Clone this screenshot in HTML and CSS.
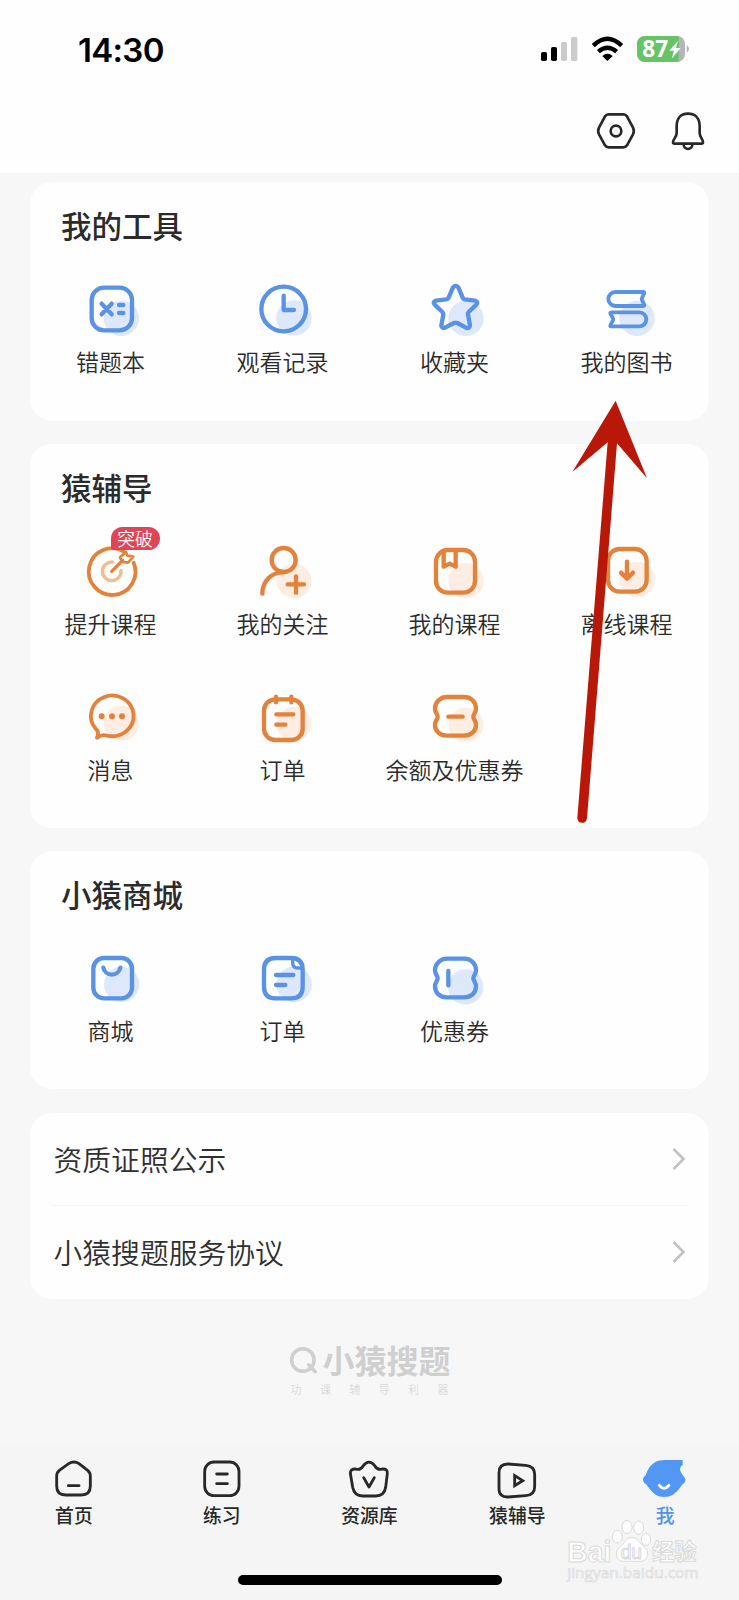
FILE: index.html
```html
<!DOCTYPE html>
<html lang="zh-CN">
<head>
<meta charset="utf-8">
<title>我</title>
<link rel="stylesheet" href="styles.css">
</head>
<body>
<div class="screen">
  <header class="header">
    <div class="status">
      <span class="time">14:30</span>
      <svg class="status-icons" viewBox="51 30 468 120">
        <g fill="#000"><rect x="63" y="96" width="18" height="27" rx="5"/><rect x="93" y="81" width="18" height="42" rx="5"/></g>
        <g fill="#cbcbcb"><rect x="123" y="66" width="18" height="57" rx="5"/><rect x="153" y="51" width="19" height="72" rx="5"/></g>
        <g fill="none" stroke="#000" stroke-width="13"><path d="M220 77Q262 36 305 77"/><path d="M235 95Q262 71 290 95"/></g>
        <path d="M247 108Q262 95 278 108L262 123Z"/>
        <clipPath id="batt"><rect x="351" y="48" width="144" height="78" rx="24"/></clipPath>
        <g clip-path="url(#batt)"><rect x="351" y="48" width="144" height="78" fill="#b5b5b5"/><rect x="351" y="48" width="125" height="78" fill="#65c466"/></g>
        <path d="M500 76Q507 79 507 87Q507 95 500 98Z" fill="#b5b5b5"/>
        <text class="batt-text" x="367" y="112">87</text>
        <path d="M474 62L448 92H462L455 116L482 84H468Z" fill="#fff"/>
      </svg>
    </div>
    <div class="actions">
      <svg class="action" viewBox="216 260 144 144"><path d="M266 282H310Q317 282 321 288L339 322Q344 332 339 342L321 375Q317 381 310 381H266Q259 381 255 375L237 342Q232 332 237 322L255 288Q259 282 266 282Z"/><circle cx="288" cy="332" r="16"/></svg>
      <svg class="action" viewBox="432 260 144 144"><path d="M504 280C480 280 470 297 470 318V338C470 350 459 356 459 366Q459 370 464 370H544Q549 370 549 366C549 356 539 350 539 338V318C539 297 528 280 504 280Z"/><path d="M491 372A13 14 0 0 0 517 372"/></svg>
    </div>
  </header>

  <main class="content">
    <section class="card card-tools">
      <h2 class="card-title">我的工具</h2>
      <div class="grid blue">
        <div class="item"><svg class="icon" viewBox="153 297 180 180"><circle class="shade" cx="274" cy="415" r="53"/><rect x="185" y="323" width="121" height="128" rx="37"/><path d="M215 371L245 403M245 371L215 403M267 375H280M267 399H280"/></svg><span class="label">错题本</span></div>
        <div class="item"><svg class="icon" viewBox="669 297 180 180"><circle class="shade" cx="792" cy="414" r="53"/><circle cx="761" cy="387" r="67"/><path d="M761 347V390H792"/></svg><span class="label">观看记录</span></div>
        <div class="item"><svg class="icon" viewBox="135 297 180 180"><circle class="shade" cx="258" cy="415" r="53"/><path d="M219 322Q227 313 235 322L248 353Q250 357 254 358L286 362Q296 366 289 374L266 396Q263 399 264 403L270 437Q268 447 258 443L232 429Q227 427 222 429L195 443Q186 446 184 437L190 403Q190 399 187 396L164 374Q157 366 167 362L199 358Q204 357 206 353Z"/></svg><span class="label">收藏夹</span></div>
        <div class="item"><svg class="icon thin" viewBox="651 297 180 180"><circle class="shade" cx="771" cy="415" r="53"/><path d="M790 336H706A21 21 0 0 0 706 378H790Q795 378 792 373L786 360Q784 357 786 354L792 341Q795 336 790 336ZM694 397H778A21 21 0 0 1 778 439H694Q689 439 692 434L699 421Q700 418 699 415L692 402Q689 397 694 397Z"/></svg><span class="label">我的图书</span></div>
      </div>
    </section>

    <section class="card">
      <h2 class="card-title">猿辅导</h2>
      <div class="grid orange">
        <div class="item"><svg class="icon thin" viewBox="153 303 180 180"><path d="M311 368A70 70 0 1 1 281 334"/><path class="inner-ring" d="M247 366A28 28 0 1 0 273 391"/><path class="dart" d="M245 394L278 361"/><path class="feather" d="M270 352L288 336L292 347L310 350L294 368L277 366Z"/></svg><span class="badge">突破</span><span class="label">提升课程</span></div>
        <div class="item"><svg class="icon" viewBox="669 303 180 180"><circle class="shade" cx="792" cy="423" r="52"/><circle cx="761" cy="360" r="36"/><path d="M697 461C697 424 724 397 758 397M798 409V458M773 433H822"/></svg><span class="label">我的关注</span></div>
        <div class="item"><svg class="icon" viewBox="165 453 180 180"><circle class="shade" cx="288" cy="572" r="53"/><rect x="198" y="480" width="117" height="128" rx="35"/><path d="M221 485V530L239 521L257 530V485"/></svg><span class="label">我的课程</span></div>
        <div class="item"><svg class="icon" viewBox="681 453 180 180"><circle class="shade" cx="802" cy="568" r="53"/><rect x="714" y="477" width="116" height="128" rx="35"/><path d="M771 515V565M753 548L771 566L789 548"/></svg><span class="label">离线课程</span></div>
        <div class="item"><svg class="icon thin" viewBox="153 741 180 180"><circle class="shade" cx="274" cy="850" r="53"/><path d="M201 893Q209 876 197 866A64 61 0 1 1 232 887Q214 882 201 893Z"/><g class="dots"><circle cx="215" cy="829" r="9"/><circle cx="246" cy="829" r="9"/><circle cx="276" cy="829" r="9"/></g></svg><span class="label">消息</span></div>
        <div class="item"><svg class="icon" viewBox="669 741 180 180"><circle class="shade" cx="792" cy="852" r="52"/><rect x="702" y="778" width="116" height="122" rx="34"/><path d="M738 770V787M784 770V787M739 823H790M739 854H766"/></svg><span class="label">订单</span></div>
        <div class="item"><svg class="icon" viewBox="165 891 180 180"><circle class="shade" cx="288" cy="1005" r="52"/><path d="M230 921H282C305 921 318 938 318 956C318 968 310 972 310 980C310 988 318 992 318 1004C318 1024 303 1037 282 1037H230C210 1037 195 1024 195 1004C195 992 203 988 203 980C203 972 195 968 195 956C195 938 210 921 230 921ZM235 980H278"/></svg><span class="label">余额及优惠券</span></div>
      </div>
    </section>

    <section class="card">
      <h2 class="card-title">小猿商城</h2>
      <div class="grid blue">
        <div class="item"><svg class="icon" viewBox="153 294 180 180"><circle class="shade" cx="275" cy="403" r="53"/><rect x="190" y="324" width="116" height="121" rx="32"/><path d="M220 353A26 26 0 0 0 271 353"/></svg><span class="label">商城</span></div>
        <div class="item"><svg class="icon" viewBox="669 294 180 180"><circle class="shade" cx="792" cy="403" r="53"/><path d="M737 324H783Q818 324 818 359V410Q818 445 783 445H737Q702 445 702 410V359Q702 324 737 324Z"/><path class="fold" d="M788 328V338Q788 354 804 354H815"/><path d="M738 375H790M738 405H766"/></svg><span class="label">订单</span></div>
        <div class="item"><svg class="icon" viewBox="1185 294 180 180"><circle class="shade" cx="1307" cy="411" r="53"/><path transform="translate(1020 -595)" d="M230 921H282C305 921 318 938 318 956C318 968 310 972 310 980C310 988 318 992 318 1004C318 1024 303 1037 282 1037H230C210 1037 195 1024 195 1004C195 992 203 988 203 980C203 972 195 968 195 956C195 938 210 921 230 921Z"/><path d="M1255 363V406"/></svg><span class="label">优惠券</span></div>
      </div>
    </section>

    <section class="card list">
      <div class="row"><span>资质证照公示</span><svg class="chevron" viewBox="0 0 14 24"><path d="M1.5 2L11.5 12L1.5 22"/></svg></div>
      <div class="row"><span>小猿搜题服务协议</span><svg class="chevron" viewBox="0 0 14 24"><path d="M1.5 2L11.5 12L1.5 22"/></svg></div>
    </section>

    <div class="brand">
      <div class="brand-name"><svg class="brand-mark" viewBox="86 80 90 84"><circle cx="129" cy="122" r="35"/><path d="M147 137L167 158"/></svg><span>小猿搜题</span></div>
      <div class="slogan"><span>功</span><span>课</span><span>辅</span><span>导</span><span>利</span><span>器</span></div>
    </div>
  </main>

  <nav class="tabbar">
    <div class="tabs">
      <div class="tab"><svg class="tab-icon" viewBox="150 75 144 144"><path d="M206 101Q222 91 237 101L263 121Q271 128 271 138V168Q271 195 244 195H197Q170 195 170 168V138Q170 128 178 121Z"/><path d="M205 167H237"/></svg><span>首页</span></div>
      <div class="tab"><svg class="tab-icon" viewBox="593 75 144 144"><rect x="613" y="96" width="103" height="101" rx="28"/><path d="M649 132H681M649 161H681"/></svg><span>练习</span></div>
      <div class="tab"><svg class="tab-icon" viewBox="1036 75 144 144"><path d="M1068 117Q1082 122 1091 107Q1108 86 1125 107Q1134 122 1148 117Q1164 116 1163 130L1158 172Q1154 198 1128 198H1089Q1064 198 1059 172L1052 130Q1052 116 1068 117Z"/><path d="M1092 143L1108 171L1124 143"/></svg><span>资源库</span></div>
      <div class="tab"><svg class="tab-icon" viewBox="370 75 144 144"><path d="M415 102L468 106Q495 108 495 133V170Q495 195 468 197L415 201Q388 202 388 176V128Q388 102 415 102Z"/><path class="sharp" d="M435 137V167L459 152Z"/></svg><span>猿辅导</span></div>
      <div class="tab active"><svg class="tab-icon" viewBox="813 75 144 144"><path class="face" d="M938 90V105Q927 113 931 122Q934 131 943 142Q950 151 942 160Q936 164 932 170Q912 201 882 201Q855 201 834 170Q830 163 823 159Q815 149 822 141Q828 136 830 128Q844 90 884 90Z"/><path class="smile" d="M868 166Q882 184 897 166"/></svg><span>我</span></div>
    </div>
    <div class="home-indicator"></div>
  </nav>

  <svg class="arrow" viewBox="0 0 1080 1320"><path d="M737 32L831 265L741 160L651 1285A14.500 14.500 0 0 1 622 1283L713 157L607 246Z"/></svg>

  <svg class="watermark" viewBox="0 0 1107 510">
    <text class="wm-big" x="592" y="395" textLength="132" lengthAdjust="spacingAndGlyphs">Bai</text>
    <g class="paw"><ellipse cx="742" cy="320" rx="15" ry="19"/><ellipse cx="771" cy="291" rx="15" ry="20"/><ellipse cx="806" cy="293" rx="15" ry="20"/><ellipse cx="828" cy="328" rx="14" ry="18"/><path d="M785 322C768 322 765 340 750 350C735 360 733 394 760 394H810C838 394 838 362 822 350C808 340 804 322 785 322Z"/></g>
    <text class="wm-du" x="752" y="386" textLength="64" lengthAdjust="spacingAndGlyphs">du</text>
    <text class="wm-cjk" x="846" y="390" textLength="134">经验</text>
    <text class="wm-url" x="592" y="444" textLength="394" lengthAdjust="spacingAndGlyphs">jingyan.baidu.com</text>
  </svg>
</div>
</body>
</html>
```
FILE: styles.css
```css
* { box-sizing: border-box; }
body {
  margin: 0;
  background: #f7f7f7;
  color: #2b2b2b;
  font-family: "Noto Sans CJK SC", "Liberation Sans", sans-serif;
}
.screen {
  position: relative;
  width: 739px;
  height: 1600px;
  overflow: hidden;
  display: flex;
  flex-direction: column;
}
.header { height: 173px; background: #fefefe; flex: none; }
.status {
  height: 98px;
  padding: 0 46px 0 78px;
  display: flex;
  align-items: center;
  justify-content: space-between;
}
.time {
  font: 600 33px/40px Inter, sans-serif;
  letter-spacing: -0.7px;
  color: #000;
  padding-top: 2px;
}
.status-icons { width: 156px; height: 40px; margin-top: 2px; }
.batt-text { font: 700 68px "Open Sans", sans-serif; fill: #fff; }
.actions {
  height: 66px;
  padding-right: 27px;
  display: flex;
  justify-content: flex-end;
  align-items: center;
  gap: 24px;
}
.action {
  width: 48px;
  height: 48px;
  fill: none;
  stroke: #262829;
  stroke-width: 8;
  stroke-linejoin: round;
}
.content {
  padding: 9px 30px 0;
  height: 1270px;
  flex: none;
  display: flex;
  flex-direction: column;
  gap: 23px;
}
.card {
  background: #fefefe;
  border-radius: 22px;
  padding: 21px 0 39px;
}
.card-tools { padding-bottom: 40px; }
.card-title {
  margin: 0 0 32px 31px;
  font-size: 30.5px;
  line-height: 44px;
  font-weight: 500;
}
.grid {
  display: grid;
  grid-template-columns: repeat(4, 172px);
  justify-content: center;
  row-gap: 44px;
  margin-left: -2px;
}
.item {
  position: relative;
  display: flex;
  flex-direction: column;
  align-items: center;
}
.icon {
  width: 60px;
  height: 60px;
  fill: none;
  stroke-width: 13;
  stroke-linecap: round;
  stroke-linejoin: round;
}
.icon.thin { stroke-width: 11.5; }
.blue .icon { stroke: #5a92e6; }
.blue .shade { fill: #dde8fc; stroke: none; }
.orange .icon { stroke: #e3823b; }
.orange .shade { fill: #fdede2; stroke: none; }
.dots { fill: #e3823b; stroke: none; }
.inner-ring { stroke: #f1be92; stroke-width: 10; }
.dart { stroke-width: 10; }
.feather { stroke-width: 8; }
.fold { stroke-width: 10; }
.label {
  margin-top: 2px;
  font-size: 23px;
  line-height: 40px;
  font-weight: 350;
  white-space: nowrap;
}
.badge {
  position: absolute;
  left: 86px;
  top: -14px;
  width: 49px;
  height: 23px;
  border-radius: 12px 12px 12px 3px;
  background: #df4556;
  color: #fff;
  font-size: 17.8px;
  line-height: 22px;
  font-weight: 350;
  text-align: center;
}
.list { margin-top: 1px; padding: 0 21px; }
.row {
  height: 93px;
  padding: 0 2px 2px 2.500px;
  display: flex;
  align-items: center;
  justify-content: space-between;
  font-size: 28.8px;
  font-weight: 350;
  color: #303030;
}
.row + .row { box-shadow: 0 -1px 0 #f4f4f4; }
.chevron {
  width: 14px;
  height: 24px;
  fill: none;
  stroke: #c2c2c2;
  stroke-width: 2.6;
}
.brand { width: 162px; margin: 17px auto 0; color: #cfcfcf; }
.brand-name {
  display: flex;
  align-items: center;
  gap: 5px;
  height: 42px;
  font-size: 32px;
  font-weight: 700;
  white-space: nowrap;
}
.brand-name span { padding-bottom: 2px; }
.brand-mark {
  width: 30px;
  height: 28px;
  fill: none;
  stroke: #cfcfcf;
  stroke-width: 11;
  stroke-linecap: round;
}
.slogan {
  display: flex;
  justify-content: space-between;
  padding: 0 2px;
  font-size: 11px;
  line-height: 16px;
  font-weight: 350;
  color: #dadada;
}
.tabbar {
  height: 157px;
  background: #f5f5f5;
  flex: none;
  padding-top: 12px;
}
.tabs { display: flex; height: 120px; }
.tab {
  flex: 1;
  display: flex;
  flex-direction: column;
  align-items: center;
  font-size: 18.800px;
  line-height: 24px;
  font-weight: 500;
  color: #262829;
}
.tab-icon {
  width: 48px;
  height: 48px;
  fill: none;
  stroke: #262829;
  stroke-width: 8.5;
  stroke-linecap: round;
  stroke-linejoin: round;
}
.sharp { stroke-linejoin: miter; }
.active { color: #4f93ee; }
.tab-icon .face { fill: #5397f5; stroke: none; }
.tab-icon .smile { stroke: #fff; }
.home-indicator {
  width: 264px;
  height: 10px;
  margin: 0 auto;
  border-radius: 5px;
  background: #000;
}
.arrow {
  position: absolute;
  left: 370px;
  top: 390px;
  width: 360px;
  height: 440px;
  fill: #b91808;
}
.watermark {
  position: absolute;
  left: 370px;
  top: 1430px;
  width: 369px;
  height: 170px;
  fill: #fdfdfd;
  stroke: #dadada;
  stroke-width: 3;
}
.wm-big { font: 700 88px "Liberation Sans", sans-serif; }
.wm-du { font: 400 60px "Liberation Sans", sans-serif; }
.wm-cjk { font: 700 67px "Noto Sans CJK SC", sans-serif; }
.wm-url { font: 400 44px "Open Sans", sans-serif; stroke-width: 2; }
```
